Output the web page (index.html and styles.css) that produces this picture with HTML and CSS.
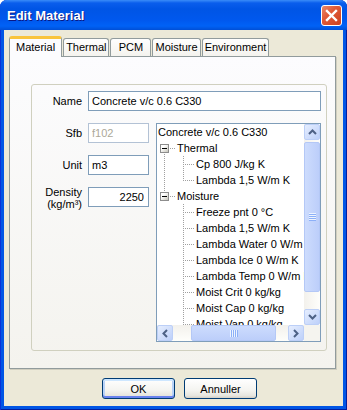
FILE: index.html
```html
<!DOCTYPE html>
<html lang="en">
<head>
    <meta charset="UTF-8">
    <title>Edit Material</title>
    <link rel="stylesheet" href="styles.css">
</head>
<body>
    <div class="window">
        <div class="titlebar">
            <span class="title">Edit Material</span>
            <span class="close">
                <svg width="21" height="21" viewBox="0 0 21 21"><path d="M6 6 L15 15 M15 6 L6 15" stroke="#fff" stroke-width="2.4" stroke-linecap="square"/></svg>
            </span>
        </div>
        <div class="client">
            <div class="tabs">
                <span class="tab active">Material</span>
                <span class="tab">Thermal</span>
                <span class="tab">PCM</span>
                <span class="tab">Moisture</span>
                <span class="tab">Environment</span>
            </div>
            <div class="panel">
                <div class="group">
                    <label class="lbl" for="name">Name</label>
                    <input class="field wide" id="name" type="text" value="Concrete v/c 0.6 C330">

                    <label class="lbl" for="sfb">Sfb</label>
                    <input class="field short" id="sfb" type="text" value="f102" disabled>

                    <label class="lbl" for="unit">Unit</label>
                    <input class="field short" id="unit" type="text" value="m3">

                    <label class="lbl two" for="density">Density<br>(kg/m³)</label>
                    <input class="field short num" id="density" type="text" value="2250">

                    <div class="tree">
                        <div class="nodes">
                            <div class="node"><span class="txt">Concrete v/c 0.6 C330</span></div>
                            <div class="node"><span class="gut first"><span class="box"></span></span><span class="txt">Thermal</span></div>
                            <div class="node"><span class="gut pipe"></span><span class="gut tee"></span><span class="txt">Cp 800 J/kg K</span></div>
                            <div class="node"><span class="gut pipe"></span><span class="gut elbow"></span><span class="txt">Lambda 1,5 W/m K</span></div>
                            <div class="node"><span class="gut last"><span class="box"></span></span><span class="txt">Moisture</span></div>
                            <div class="node"><span class="gut"></span><span class="gut tee"></span><span class="txt">Freeze pnt 0 °C</span></div>
                            <div class="node"><span class="gut"></span><span class="gut tee"></span><span class="txt">Lambda 1,5 W/m K</span></div>
                            <div class="node"><span class="gut"></span><span class="gut tee"></span><span class="txt">Lambda Water 0 W/m K</span></div>
                            <div class="node"><span class="gut"></span><span class="gut tee"></span><span class="txt">Lambda Ice 0 W/m K</span></div>
                            <div class="node"><span class="gut"></span><span class="gut tee"></span><span class="txt">Lambda Temp 0 W/m K</span></div>
                            <div class="node"><span class="gut"></span><span class="gut tee"></span><span class="txt">Moist Crit 0 kg/kg</span></div>
                            <div class="node"><span class="gut"></span><span class="gut tee"></span><span class="txt">Moist Cap 0 kg/kg</span></div>
                            <div class="node"><span class="gut"></span><span class="gut tee"></span><span class="txt">Moist Vap 0 kg/kg</span></div>
                        </div>
                        <div class="vscroll">
                            <span class="sbtn"><svg width="9" height="6" viewBox="0 0 9 6"><polyline points="1,5 4.5,1.5 8,5" fill="none" stroke="#4d6185" stroke-width="2"/></svg></span>
                            <span class="vtrack"><span class="vthumb"><span class="vgrip"></span></span></span>
                            <span class="sbtn"><svg width="9" height="6" viewBox="0 0 9 6"><polyline points="1,1 4.5,4.5 8,1" fill="none" stroke="#4d6185" stroke-width="2"/></svg></span>
                        </div>
                        <div class="hscroll">
                            <span class="sbtn"><svg width="6" height="9" viewBox="0 0 6 9"><polyline points="5,1 1.5,4.5 5,8" fill="none" stroke="#4d6185" stroke-width="2"/></svg></span>
                            <span class="htrack"><span class="hthumb"><span class="hgrip"></span></span></span>
                            <span class="sbtn"><svg width="6" height="9" viewBox="0 0 6 9"><polyline points="1,1 4.5,4.5 1,8" fill="none" stroke="#4d6185" stroke-width="2"/></svg></span>
                        </div>
                        <div class="corner"></div>
                    </div>
                </div>
            </div>
            <div class="buttons">
                <button class="btn default" type="button">OK</button>
                <button class="btn" type="button">Annuller</button>
            </div>
        </div>
    </div>
</body>
</html>
```

FILE: styles.css
```css
/* XP style dialog */
body {
    margin: 0;
    background: #fff;
    font-family: 'Liberation Sans', Arial, sans-serif;
    font-size: 11px;
    color: #000;
}

.window {
    width: 347px;
    height: 410px;
    box-sizing: border-box;
    display: flex;
    flex-direction: column;
    background: #0055e5;
    border-radius: 7px 7px 0 0;
    box-shadow: inset 1px 0 0 #0831d9, inset -1px 0 0 #001ea0, inset 0 -1px 0 #001ea0;
}

.titlebar {
    height: 30px;
    flex: none;
    display: flex;
    align-items: center;
    justify-content: space-between;
    padding: 0 5px 0 7px;
    border-radius: 7px 7px 0 0;
    background: linear-gradient(#3a8cf8 0px, #0a5eec 3px, #0055e5 9px, #0058ee 20px, #0062f6 26px, #004fd6 30px);
}

.title {
    color: #fff;
    font-weight: bold;
    font-size: 13px;
    text-shadow: 1px 1px 0 #0a1883;
    padding-top: 1px;
}

.close {
    width: 21px;
    height: 21px;
    box-sizing: border-box;
    display: flex;
    border: 1px solid #fff;
    border-radius: 3px;
    background: linear-gradient(135deg, #e8896b 0%, #e05a38 40%, #cc411f 100%);
    margin-top: 1px;
}

.close svg {
    margin: -1px;
}

.client {
    flex: 1;
    min-height: 0;
    display: flex;
    flex-direction: column;
    margin: 0 4px 4px 4px;
    padding-top: 6px;
    background: #ece9d8;
}

/* tabs */
.tabs {
    display: flex;
    align-items: flex-end;
    gap: 1px;
    padding-left: 5px;
    height: 20px;
    flex: none;
}

.tab {
    height: 18px;
    min-width: 41px;
    box-sizing: border-box;
    padding: 0 2px;
    text-align: center;
    line-height: 17px;
    border: 1px solid #919b9c;
    border-bottom: none;
    border-radius: 3px 3px 0 0;
    background: linear-gradient(#fefefe, #f4f3ee);
}

.tab.active {
    height: 21px;
    margin-bottom: -1px;
    padding: 0 6px;
    position: relative;
    line-height: 17px;
    border-top: 3px solid #f9c43c;
    background: #fcfcfe;
    box-shadow: inset 0 -1px 0 #fcfcfe;
}

.panel {
    flex: 1;
    min-height: 0;
    display: flex;
    flex-direction: column;
    margin: 0 7px 0 5px;
    padding: 27px 8px 17px 21px;
    border: 1px solid #919b9c;
    background: linear-gradient(#fcfcfe, #f4f3ee);
    box-shadow: 1px 1px 0 #d0cebf;
}

.group {
    flex: 1;
    min-height: 0;
    display: grid;
    grid-template-columns: 50px 62px 165px;
    grid-template-rows: 20px 20px 20px 20px minmax(0, 1fr);
    column-gap: 6px;
    row-gap: 12px;
    padding: 6px 5px 8px 0;
    border: 1px solid #d0d0bf;
    border-radius: 3px;
}

.lbl {
    align-self: center;
    text-align: right;
}

.lbl.two {
    line-height: 12px;
    margin-top: 1px;
}

.field {
    height: 20px;
    box-sizing: border-box;
    border: 1px solid #7f9db9;
    padding: 0 3px;
    margin: 0;
    font-family: 'Liberation Sans', Arial, sans-serif;
    font-size: 11px;
    color: #000;
    background: #fff;
    outline: none;
}

.field.wide {
    grid-column: 2 / 4;
}

.field.short {
    width: 61px;
}

.field:disabled {
    border-color: #b3c2d5;
    color: #aca899;
    background: #fff;
}

.field.num {
    text-align: right;
    padding-right: 4px;
}

/* tree view */
.tree {
    grid-column: 3;
    grid-row: 2 / 6;
    min-height: 0;
    display: grid;
    grid-template-columns: minmax(0, 1fr) 16px;
    grid-template-rows: minmax(0, 1fr) 16px;
    border: 1px solid #7f9db9;
    background: #fff;
    overflow: hidden;
}

.nodes {
    overflow: hidden;
    min-height: 0;
}

.node {
    display: flex;
    height: 16px;
    white-space: nowrap;
}

.txt {
    padding-left: 1px;
    line-height: 16px;
}

.gut {
    flex: none;
    width: 19px;
    height: 16px;
    background-repeat: no-repeat;
}

.pipe {
    background-image: repeating-linear-gradient(to bottom, #a0a0a0 0 1px, transparent 1px 2px);
    background-size: 1px 16px;
    background-position: 7px 0;
}

.tee {
    background-image: repeating-linear-gradient(to bottom, #a0a0a0 0 1px, transparent 1px 2px),
                      repeating-linear-gradient(to right, #a0a0a0 0 1px, transparent 1px 2px);
    background-size: 1px 16px, 11px 1px;
    background-position: 7px 0, 7px 8px;
}

.elbow {
    background-image: repeating-linear-gradient(to bottom, #a0a0a0 0 1px, transparent 1px 2px),
                      repeating-linear-gradient(to right, #a0a0a0 0 1px, transparent 1px 2px);
    background-size: 1px 9px, 11px 1px;
    background-position: 7px 0, 7px 8px;
}

.first {
    background-image: repeating-linear-gradient(to bottom, #a0a0a0 0 1px, transparent 1px 2px),
                      repeating-linear-gradient(to right, #a0a0a0 0 1px, transparent 1px 2px);
    background-size: 1px 8px, 12px 1px;
    background-position: 7px 8px, 7px 8px;
}

.last {
    background-image: repeating-linear-gradient(to bottom, #a0a0a0 0 1px, transparent 1px 2px),
                      repeating-linear-gradient(to right, #a0a0a0 0 1px, transparent 1px 2px);
    background-size: 1px 9px, 12px 1px;
    background-position: 7px 0, 7px 8px;
}

.box {
    display: block;
    width: 9px;
    height: 9px;
    box-sizing: border-box;
    margin: 4px 0 0 3px;
    border: 1px solid #8d8d8d;
    background: linear-gradient(#000, #000) 1px 3px / 5px 1px no-repeat,
                linear-gradient(135deg, #fff 30%, #c8c6bb);
}

/* scrollbars */
.vscroll {
    display: flex;
    flex-direction: column;
    min-height: 0;
    background: linear-gradient(to right, #f3f1ec, #fefefb);
}

.hscroll {
    display: flex;
    background: linear-gradient(#f3f1ec, #fefefb);
}

.corner {
    background: #f5f4ef;
}

.sbtn {
    flex: none;
    width: 16px;
    height: 16px;
    box-sizing: border-box;
    display: flex;
    align-items: center;
    justify-content: center;
    border: 1px solid #bccff7;
    border-radius: 2px;
    background: linear-gradient(135deg, #e6eefe, #bdd0fa);
}

.vtrack {
    flex: 1;
    min-height: 0;
    padding-top: 2px;
}

.vthumb {
    height: 150px;
    box-sizing: border-box;
    display: flex;
    align-items: center;
    justify-content: center;
    border: 1px solid #b4c8f6;
    border-radius: 2px;
    background: linear-gradient(to right, #cddcfd, #bccefa);
}

.vgrip {
    width: 7px;
    height: 8px;
    background: repeating-linear-gradient(to bottom, #eef4fe 0 1px, #8cb0f8 1px 2px);
}

.htrack {
    flex: 1;
    display: flex;
    padding-left: 18px;
}

.hthumb {
    width: 85px;
    box-sizing: border-box;
    display: flex;
    align-items: center;
    justify-content: center;
    border: 1px solid #b4c8f6;
    border-radius: 2px;
    background: linear-gradient(#cddcfd, #bccefa);
}

.hgrip {
    width: 8px;
    height: 7px;
    background: repeating-linear-gradient(to right, #eef4fe 0 1px, #8cb0f8 1px 2px);
}

/* dialog buttons */
.buttons {
    display: flex;
    justify-content: center;
    gap: 9px;
    padding: 9px 0 7px 12px;
    flex: none;
}

.btn {
    width: 73px;
    height: 21px;
    padding: 0;
    font-family: 'Liberation Sans', Arial, sans-serif;
    font-size: 11px;
    color: #000;
    border: 1px solid #003c74;
    border-radius: 3px;
    background: linear-gradient(#ffffff, #f4f4f0 60%, #e6e5de 88%, #d6d0c5);
}

.btn.default {
    box-shadow: inset 0 2px 0 #cee7ff, inset 0 -2px 0 #6982ee, inset 2px 0 0 #b8d2f7, inset -2px 0 0 #b8d2f7;
}
```
